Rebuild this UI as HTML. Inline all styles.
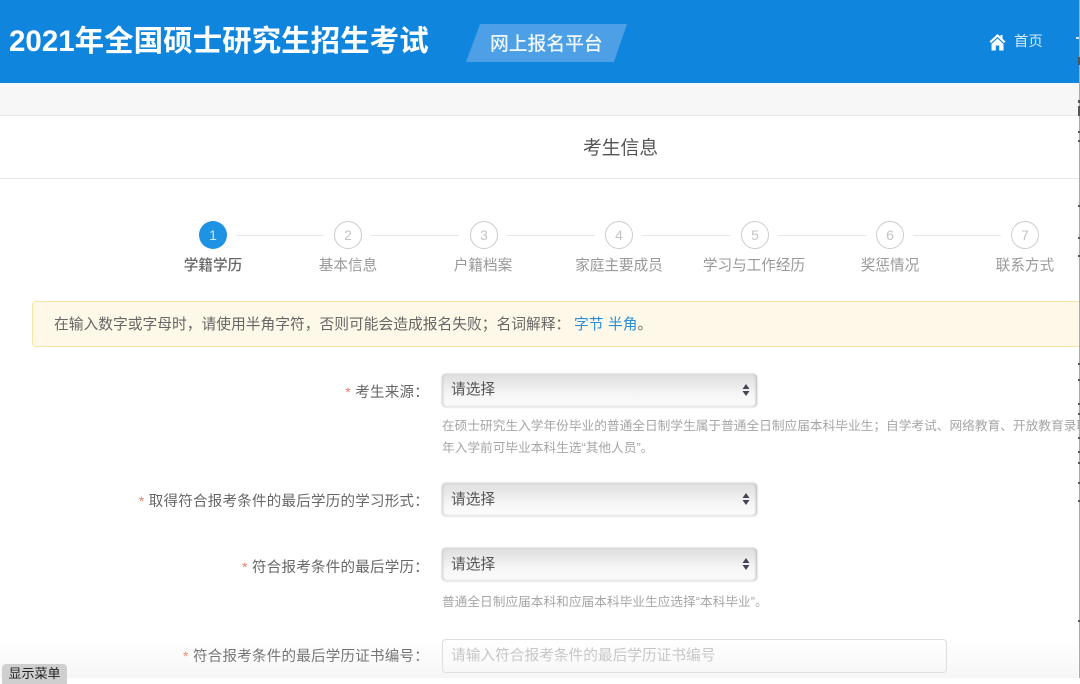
<!DOCTYPE html>
<html lang="zh"><head><meta charset="utf-8"><title>考生信息</title>
<style>
html,body{margin:0;padding:0;background:#fff}
body{width:1080px;height:678px;overflow:hidden;position:relative;font-family:"Liberation Sans","Noto Sans CJK SC",sans-serif;color:#555}
.a{position:absolute;white-space:nowrap}
.num{width:26px;height:26px;border:1px solid #ccc;border-radius:50%;box-sizing:content-box;color:#c4c4c4;font-size:14px;line-height:26px;text-align:center;top:221px}
.line{top:235px;height:1px;background:#e8e8e8;width:88px}
.lab{top:256px;font-size:14.6px;line-height:20px;color:#999;text-align:center;width:136px}
.req{color:#e8836c;font-size:14px}
.fl{font-size:14.5px;line-height:20px;color:#666;right:651px;text-align:right;letter-spacing:.25px}
.sel{left:442px;width:315px;height:33px;border-radius:4px;background:linear-gradient(#dedede,#e9e9e9 30%,#f5f5f5 60%,#fbfbfb 90%,#f0f0f0);box-shadow:0 0 2px #c4c4c4, inset 2px 0 2px -1px #ccc, inset -2px 0 2px -1px #bbb;color:#555;font-size:14.7px;text-indent:9px}
.sel svg{position:absolute;right:7px;top:9px}
.hint{left:442px;font-size:12.7px;line-height:22px;color:#a6a6a6}
</style></head><body>
<div class="a" style="left:0;top:0;width:1080px;height:83px;background:#1085de"></div>
<div class="a" style="left:9px;top:23px;font-size:29.5px;line-height:38px;font-weight:bold;color:#fff">2021年全国硕士研究生招生考试</div>
<svg class="a" style="left:466px;top:24px" width="162" height="38"><polygon points="14,0 161,0 148,38 0,38" fill="#4d9fe6"/></svg>
<div class="a" style="left:490px;top:32px;font-size:18.8px;line-height:24px;font-weight:500;color:#f0f8fe">网上报名平台</div>
<svg class="a" style="left:989px;top:33px" width="17" height="18" viewBox="0 0 17 18"><path d="M8.5 1 L0.5 8.5 L2 10 L8.5 4 L15 10 L16.5 8.5 L13.5 5.7 V2 H11.5 V3.8 Z M8.5 5.5 L2.5 11 V17.5 H6.8 V12.5 H10.2 V17.5 H14.5 V11 Z" fill="#fff"/></svg>
<div class="a" style="left:1014px;top:32px;font-size:14.4px;line-height:20px;color:#d5ecfb">首页</div>
<div class="a" style="left:1076px;top:37px;width:3px;height:2px;background:#cfe8fa"></div>

<div class="a" style="left:0;top:83px;width:1080px;height:32px;background:#f7f7f7;border-bottom:1px solid #e6e6e6"></div>
<div class="a" style="left:0;top:178px;width:1080px;height:1px;background:#e6e6e6"></div>
<div class="a" style="left:583px;top:136px;font-size:18.8px;line-height:24px;color:#555">考生信息</div>

<div class="a" style="left:199px;top:221px;width:28px;height:28px;border-radius:50%;background:#1e92e3;color:#cfe9fb;font-size:14px;line-height:28px;text-align:center">1</div>
<div class="a num" style="left:334px">2</div>
<div class="a num" style="left:470px">3</div>
<div class="a num" style="left:605px">4</div>
<div class="a num" style="left:741px">5</div>
<div class="a num" style="left:876px">6</div>
<div class="a num" style="left:1011px">7</div>
<div class="a line" style="left:236px"></div>
<div class="a line" style="left:371px"></div>
<div class="a line" style="left:507px"></div>
<div class="a line" style="left:642px"></div>
<div class="a line" style="left:778px"></div>
<div class="a line" style="left:913px"></div>
<div class="a lab" style="left:145px;color:#666;font-weight:500">学籍学历</div>
<div class="a lab" style="left:280px">基本信息</div>
<div class="a lab" style="left:415px">户籍档案</div>
<div class="a lab" style="left:551px">家庭主要成员</div>
<div class="a lab" style="left:686px">学习与工作经历</div>
<div class="a lab" style="left:822px">奖惩情况</div>
<div class="a lab" style="left:957px">联系方式</div>

<div class="a" style="left:32px;top:301px;width:1060px;height:44px;background:#fef8e8;border:1px solid #f6e5a8;border-radius:4px"></div>
<div class="a" style="left:54px;top:315px;font-size:14.75px;line-height:20px;color:#666">在输入数字或字母时，请使用半角字符，否则可能会造成报名失败；名词解释：</div>
<div class="a" style="left:574px;top:315px;font-size:14.75px;line-height:20px;color:#2a8fd8">字节</div>
<div class="a" style="left:608px;top:315px;font-size:14.75px;line-height:20px;color:#2a8fd8">半角<span style="color:#666">。</span></div>

<div class="a fl" style="top:382px"><span class="req">*</span> 考生来源：</div>
<div class="a sel" style="top:374px;line-height:33px">请选择<svg width="8" height="14" viewBox="0 0 8 14"><path d="M4 1 L7.5 6 H.5 Z M.5 8 H7.5 L4 13 Z" fill="#445"/></svg></div>
<div class="a hint" style="top:415px;width:638px;overflow:hidden">在硕士研究生入学年份毕业的普通全日制学生属于普通全日制应届本科毕业生；自学考试、网络教育、开放教育录取<br>年入学前可毕业本科生选“其他人员”。</div>

<div class="a fl" style="top:491px"><span class="req">*</span> 取得符合报考条件的最后学历的学习形式：</div>
<div class="a sel" style="top:483px;line-height:34px">请选择<svg width="8" height="14" viewBox="0 0 8 14"><path d="M4 1 L7.5 6 H.5 Z M.5 8 H7.5 L4 13 Z" fill="#445"/></svg></div>

<div class="a fl" style="top:557px"><span class="req">*</span> 符合报考条件的最后学历：</div>
<div class="a sel" style="top:548px;line-height:34px">请选择<svg width="8" height="14" viewBox="0 0 8 14"><path d="M4 1 L7.5 6 H.5 Z M.5 8 H7.5 L4 13 Z" fill="#445"/></svg></div>
<div class="a hint" style="top:591px">普通全日制应届本科和应届本科毕业生应选择“本科毕业”。</div>

<div class="a fl" style="top:646px"><span class="req">*</span> 符合报考条件的最后学历证书编号：</div>
<div class="a" style="left:442px;top:639px;width:503px;height:32px;border:1px solid #ddd;border-radius:4px;background:#fff;font-size:14.7px;line-height:33px;color:#c4c4c4;text-indent:8px">请输入符合报考条件的最后学历证书编号</div>

<div class="a" style="left:0;top:640px;width:1078px;height:38px;background:linear-gradient(rgba(225,225,225,0),rgba(225,225,225,.3))"></div>
<div class="a" style="left:2px;top:664px;width:65px;height:20px;background:#cfcfcf;border-radius:4px 4px 0 0;font-size:13px;line-height:20px;color:#222;text-align:center">显示菜单</div>

<div class="a" style="left:1079px;top:0;width:1px;height:678px;background:#aaa"></div>
<svg class="a" style="left:1078px;top:0" width="2" height="678"><path d="M1 57V65M1 100V103M1 106V116M1 131V133M1 140V142M1 205V207M1 237V239M1 255V257M1 363V365M1 379V381M1 403V405M1 413V415M1 437V439M1 451V453M1 462V464M1 482V484M1 500V502M1 620V622" stroke="#555" stroke-width="2"/></svg>
</body></html>
